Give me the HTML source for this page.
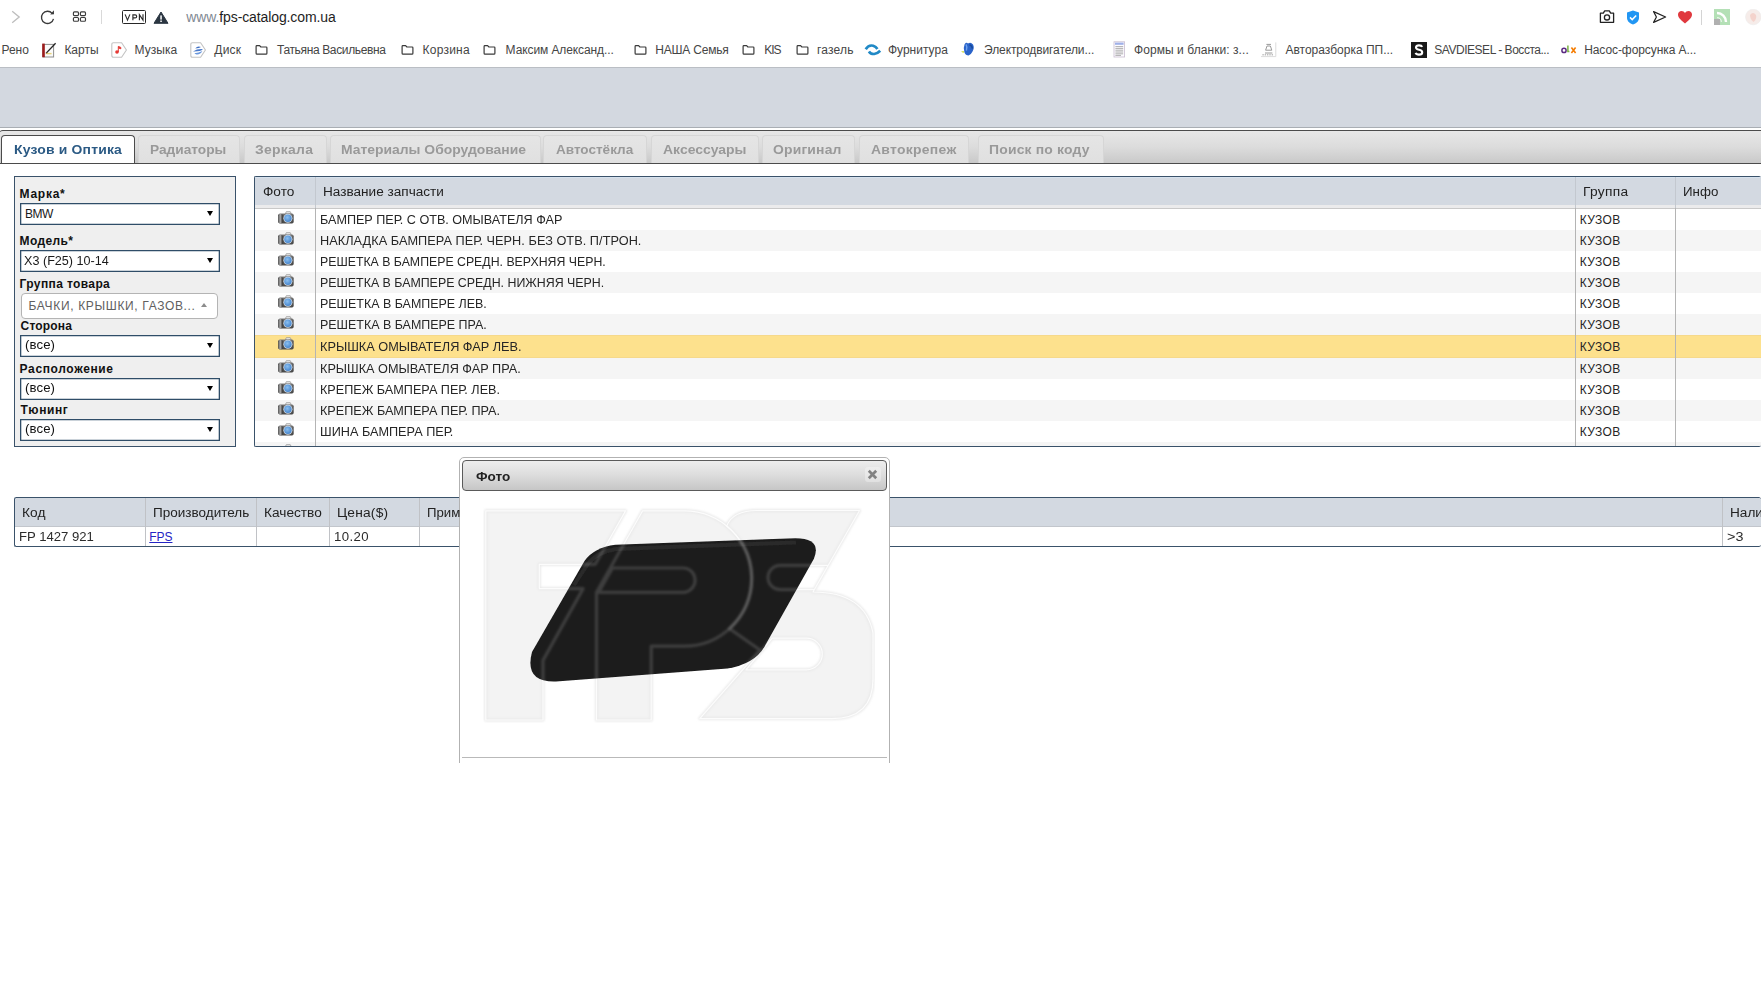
<!DOCTYPE html>
<html lang="ru"><head><meta charset="utf-8"><title>FPS catalog</title>
<style>
html,body{margin:0;padding:0;}
html{overflow:hidden;width:1761px;height:987px;}
body{width:1761px;height:987px;overflow:hidden;position:relative;background:#fff;
 font-family:"Liberation Sans",sans-serif;color:#222;}
.a{position:absolute;box-sizing:border-box;}
.t{position:absolute;transform-origin:0 50%;white-space:nowrap;line-height:1;font-family:"Liberation Sans",sans-serif;color:#222;}
svg{position:absolute;overflow:visible;}
/* page header band */
#band{left:0;top:67px;width:1761px;height:61px;background:#d3d8e0;border-top:1px solid #babec4;border-bottom:1px solid #a9aeb4;}
/* tab strip */
#tabs{left:-2px;top:130px;width:1763px;height:34px;border:1px solid #4b4b4b;border-right:none;border-radius:5px 0 0 0;
 background:linear-gradient(#e7e7e7 0%,#dcdcdc 50%,#c9c9c9 100%);}
.tab{top:135px;height:28px;border:1px solid #d6d6d6;border-bottom:none;border-radius:4px 4px 0 0;
 background:linear-gradient(#e5e5e5,#e0e0e0);}
.tab.on{height:28px;background:#fff;border-color:#4b4b4b;}
/* filter panel */
#panel{left:14px;top:176px;width:222px;height:271px;background:#efefef;border:1px solid #3a526a;}
.sel{left:20px;width:200px;height:22px;background:#fff;border:1px solid #2f4d68;box-shadow:inset 0 0 0 .3px #2f4d68;}
.arr{width:0;height:0;border-left:3.2px solid transparent;border-right:3.2px solid transparent;border-top:5.6px solid #000;}
#s2{left:20.5px;top:293px;width:197.5px;height:26px;background:#fff;border:1px solid #b4b4b4;border-radius:4px;}
/* grids */
.grid{border:1px solid #3a526a;border-right:none;background:#fff;overflow:hidden;}
.gh{background:#d3d9e1;}
.vl{width:1px;background:#b4b4b4;}
.row{left:0;width:1506px;}
.alt{background:#f5f5f5;}
.hl{background:#fde18d;border-top:1px solid #f6d98b;border-bottom:1px solid #f6d98b;}
/* dialog */
#dlg{left:459px;top:457px;width:431px;height:320px;background:#fff;border:1px solid #b2b2b2;border-radius:5px;}
#dlgt{left:462px;top:460px;width:425px;height:31px;border:1px solid #5a5a5a;border-radius:4px;
 background:linear-gradient(#ededed 0%,#dedede 45%,#c6c6c6 100%);}
#dlgx{left:865px;top:467px;width:16px;height:15px;border-radius:3px;background:rgba(255,255,255,.32);}

</style></head>
<body>
<!-- browser toolbar -->
<svg style="left:10px;top:9px" width="12" height="16" viewBox="0 0 12 16"><path d="M2.2 2.3 L9.2 8 L2.2 13.7" fill="none" stroke="#bdbdbd" stroke-width="1.3"/></svg>
<svg style="left:39px;top:9px" width="17" height="17" viewBox="0 0 17 17"><path d="M13.2 4.4 A6.1 6.1 0 1 0 14.5 9.9" fill="none" stroke="#3a3a3a" stroke-width="1.35"/><path d="M11.2 5.4 L15 5.2 L14.9 1.3 Z" fill="#3a3a3a"/></svg>
<svg style="left:72px;top:10px" width="15" height="13" viewBox="0 0 15 13"><g fill="none" stroke="#3c3c3c" stroke-width="1.15"><rect x="1.4" y="1.9" width="5.1" height="3.7" rx="1"/><rect x="8.4" y="1.9" width="5.1" height="3.7" rx="1"/><rect x="1.4" y="7.5" width="5.1" height="3.7" rx="1"/><rect x="8.4" y="7.5" width="5.1" height="3.7" rx="1"/></g></svg>
<div class="a" style="left:101px;top:10px;width:1px;height:14px;background:#d9d9d9"></div>
<div class="a" style="left:122px;top:10px;width:24px;height:14px;border:1.25px solid #262626;border-radius:1.5px"></div>
<svg style="left:124px;top:13px" width="21" height="9" viewBox="0 0 21 9"><g fill="none" stroke="#2a2a2a" stroke-width="1.15" stroke-linejoin="miter"><path d="M1.1 1.4 L3.5 7.1 L5.9 1.4"/><path d="M8.9 7.3 V1.9 H11.1 Q12.7 1.9 12.7 3.4 Q12.7 4.9 11.1 4.9 H8.9"/><path d="M15.4 7.3 V1.6 L19 7 V1.3"/></g></svg>
<svg style="left:153px;top:11px" width="16" height="13" viewBox="0 0 16 13"><path d="M8 1 L15 12.3 H1 Z" fill="#2b3642" stroke="#2b3642" stroke-width="1" stroke-linejoin="round"/><rect x="7.3" y="4.4" width="1.5" height="4.2" fill="#fff"/><rect x="7.3" y="9.5" width="1.5" height="1.5" fill="#fff"/></svg>
<svg style="left:1599px;top:9px" width="16" height="15" viewBox="0 0 16 15"><path d="M1.4 4.2 H4.3 L5.7 1.8 H10.3 L11.7 4.2 H14.6 V13.3 H1.4 Z" fill="none" stroke="#222" stroke-width="1.3" stroke-linejoin="round"/><circle cx="8" cy="8.4" r="2.6" fill="none" stroke="#222" stroke-width="1.3"/></svg>
<svg style="left:1626px;top:10px" width="14" height="15" viewBox="0 0 14 15"><path d="M7 0.6 L13 2.6 V7.8 C13 11.2 10.3 13.6 7 14.6 C3.7 13.6 1 11.2 1 7.8 V2.6 Z" fill="#2196f3"/><path d="M4 7.4 L6.2 9.6 L10.2 5.4" fill="none" stroke="#fff" stroke-width="1.5"/></svg>
<svg style="left:1652px;top:10px" width="15" height="14" viewBox="0 0 15 14"><path d="M1.6 1.6 L13.6 7 L1.6 12.4 L4.4 7 Z" fill="none" stroke="#222" stroke-width="1.2" stroke-linejoin="round"/></svg>
<svg style="left:1677px;top:10px" width="16" height="14" viewBox="0 0 16 14"><path d="M8 13.4 C3 9.6 1 7.2 1 4.6 C1 2.4 2.7 1 4.5 1 C6 1 7.3 1.9 8 3.1 C8.7 1.9 10 1 11.5 1 C13.3 1 15 2.4 15 4.6 C15 7.2 13 9.6 8 13.4 Z" fill="#e0393e"/></svg>
<div class="a" style="left:1701px;top:10px;width:1px;height:15px;background:#d4d4d4"></div>
<svg style="left:1714px;top:9px" width="16" height="16" viewBox="0 0 16 16"><rect x="0" y="0" width="16" height="16" fill="#b4e0b6"/><path d="M3 4 A9 9 0 0 1 12 13" fill="none" stroke="#fff" stroke-width="2.4"/><path d="M3 8.6 A4.4 4.4 0 0 1 7.4 13" fill="none" stroke="#e8f5e9" stroke-width="1.2"/><rect x="0" y="10" width="6" height="6" fill="#b0b0b0"/></svg>
<svg style="left:1745px;top:9px;overflow:hidden" width="16" height="17" viewBox="0 0 16 17"><circle cx="8.3" cy="8" r="7.8" fill="#f6ece9" stroke="#ececec" stroke-width=".6"/><path d="M5 6 Q8 2 11 6 Q12 10 8.5 13 Q5 10 5 6Z" fill="#f3c9bf" opacity=".7"/></svg>
<!-- bookmarks -->
<svg style="left:254.5px;top:44px" width="13" height="12" viewBox="0 0 13 12"><path d="M1.1 9.2 V2.4 Q1.1 1.6 1.9 1.6 H4.6 L5.9 3 H11.1 Q11.9 3 11.9 3.8 V9.2 Q11.9 10.2 11 10.2 H2 Q1.1 10.2 1.1 9.2 Z" fill="none" stroke="#3a3a3a" stroke-width="1.2" stroke-linejoin="round"/></svg>
<svg style="left:400.6px;top:44px" width="13" height="12" viewBox="0 0 13 12"><path d="M1.1 9.2 V2.4 Q1.1 1.6 1.9 1.6 H4.6 L5.9 3 H11.1 Q11.9 3 11.9 3.8 V9.2 Q11.9 10.2 11 10.2 H2 Q1.1 10.2 1.1 9.2 Z" fill="none" stroke="#3a3a3a" stroke-width="1.2" stroke-linejoin="round"/></svg>
<svg style="left:483.4px;top:44px" width="13" height="12" viewBox="0 0 13 12"><path d="M1.1 9.2 V2.4 Q1.1 1.6 1.9 1.6 H4.6 L5.9 3 H11.1 Q11.9 3 11.9 3.8 V9.2 Q11.9 10.2 11 10.2 H2 Q1.1 10.2 1.1 9.2 Z" fill="none" stroke="#3a3a3a" stroke-width="1.2" stroke-linejoin="round"/></svg>
<svg style="left:633.7px;top:44px" width="13" height="12" viewBox="0 0 13 12"><path d="M1.1 9.2 V2.4 Q1.1 1.6 1.9 1.6 H4.6 L5.9 3 H11.1 Q11.9 3 11.9 3.8 V9.2 Q11.9 10.2 11 10.2 H2 Q1.1 10.2 1.1 9.2 Z" fill="none" stroke="#3a3a3a" stroke-width="1.2" stroke-linejoin="round"/></svg>
<svg style="left:742px;top:44px" width="13" height="12" viewBox="0 0 13 12"><path d="M1.1 9.2 V2.4 Q1.1 1.6 1.9 1.6 H4.6 L5.9 3 H11.1 Q11.9 3 11.9 3.8 V9.2 Q11.9 10.2 11 10.2 H2 Q1.1 10.2 1.1 9.2 Z" fill="none" stroke="#3a3a3a" stroke-width="1.2" stroke-linejoin="round"/></svg>
<svg style="left:795.5px;top:44px" width="13" height="12" viewBox="0 0 13 12"><path d="M1.1 9.2 V2.4 Q1.1 1.6 1.9 1.6 H4.6 L5.9 3 H11.1 Q11.9 3 11.9 3.8 V9.2 Q11.9 10.2 11 10.2 H2 Q1.1 10.2 1.1 9.2 Z" fill="none" stroke="#3a3a3a" stroke-width="1.2" stroke-linejoin="round"/></svg>
<svg style="left:41px;top:41px" width="17" height="18" viewBox="0 0 17 18"><rect x="2" y="3.4" width="10.6" height="12.6" fill="#fafafa" stroke="#8d8d8d" stroke-width="1"/><rect x="1.2" y="2.6" width="2.6" height="13.6" fill="#9c1b1b"/><path d="M5.6 12.6 H10.6" stroke="#e6d27a" stroke-width="1.4"/><path d="M5 12.4 L14.6 2.2" stroke="#222" stroke-width="1.3"/><path d="M4.4 13.4 L5.8 11.6 L6.4 12.2 Z" fill="#caa24a"/></svg>
<svg style="left:110.6px;top:42px" width="17" height="17" viewBox="0 0 17 17"><path d="M2.4 0.8 H10.6 L15.4 8 L10.6 15.2 H2.4 Q0.8 15.2 0.8 13.6 V2.4 Q0.8 0.8 2.4 0.8 Z" fill="#fff" stroke="#c4c4c4" stroke-width="1.1"/><circle cx="6" cy="10" r="1.8" fill="#e53935"/><path d="M7.3 10 V4.4 L9.8 5.4 V6.8 L7.3 5.9" fill="#e53935" stroke="#e53935" stroke-width="1" stroke-linejoin="round"/></svg>
<svg style="left:189.6px;top:42px" width="17" height="17" viewBox="0 0 17 17"><path d="M2.4 0.8 H10.6 L15.4 8 L10.6 15.2 H2.4 Q0.8 15.2 0.8 13.6 V2.4 Q0.8 0.8 2.4 0.8 Z" fill="#fff" stroke="#c4c4c4" stroke-width="1.1"/><path d="M5.2 6.6 Q7.6 3.4 11 5 Q9.4 6.4 5.2 6.6Z" fill="#3f6fc4"/><path d="M3 9.4 Q7.6 6.6 13 7.2 Q10.6 9.6 3 9.4Z" fill="#4a7acb"/><path d="M4.4 11.2 Q9 11 12.4 9 Q10.6 12.6 6.6 12.4 Q5.2 12.2 4.4 11.2Z" fill="#6a97dc"/></svg>
<svg style="left:864px;top:42px" width="18" height="14" viewBox="0 0 18 14"><g fill="none" stroke="#2089c6" stroke-width="2.7"><path d="M1.7 7.2 Q4.6 2.6 9.2 3.7 Q12 4.6 13.4 7"/><path d="M4.9 9.4 Q6.8 12.2 10.2 12 Q13.6 11.5 16.2 8.8"/></g></svg>
<svg style="left:960px;top:41px" width="16" height="17" viewBox="0 0 16 17"><path d="M4.6 3.2 Q6.4 0.8 8 2.6 Q10.6 0.6 13 3.4 Q14.8 6.6 12.4 10.8 Q10.8 14 8.6 14.6 Q5.6 14.4 4.4 11.2 Q3 7 4.6 3.2Z" fill="#2a63c9"/><path d="M6 3.4 Q7.6 6 6.4 9.6" stroke="#6fa2ee" stroke-width="1.4" fill="none"/><path d="M9.4 4 Q12 4.2 12.4 7.6" stroke="#174a9c" stroke-width="1.4" fill="none"/><path d="M1 10.4 L4 10 L3.6 12Z" fill="#cddc39"/></svg>
<svg style="left:1113px;top:41px" width="13" height="17" viewBox="0 0 13 17"><rect x="1" y="0.8" width="10.6" height="15.2" fill="#fdfcff" stroke="#c9bcd0" stroke-width=".8"/><rect x="2" y="1.6" width="8.6" height="2.2" fill="#9fb0e8"/><g stroke="#9a9a9a" stroke-width=".8"><path d="M2.4 5.6H10.2M2.4 7.4H10.2M2.4 9.2H10.2M2.4 11H10.2M2.4 12.8H10.2M2.4 14.4H8"/></g></svg>
<svg style="left:1260px;top:41px" width="17" height="17" viewBox="0 0 17 17"><path d="M15.8 1.4 V15.6 H1" fill="none" stroke="#dcdcdc" stroke-width="1"/><path d="M6.4 3.4 H11 M7 5 H10.4 L11.8 9.2 H5.6 Z M5 12 H12.4" fill="none" stroke="#9a9a9a" stroke-width="1"/><path d="M2.4 13.8 H13.6" stroke="#bdbdbd" stroke-width="1.4" stroke-dasharray="1.4 .9"/></svg>
<svg style="left:1411px;top:42px" width="16" height="16" viewBox="0 0 16 16"><rect width="16" height="16" fill="#1a1a1a"/><path d="M11.2 4.9 Q10.6 3.4 8 3.4 Q5 3.4 5 5.6 Q5 7.2 8 7.8 Q11.2 8.4 11.2 10.4 Q11.2 12.6 8 12.6 Q5.2 12.6 4.6 10.9" fill="none" stroke="#fff" stroke-width="2.1"/></svg>
<svg style="left:1561px;top:44px" width="16" height="11" viewBox="0 0 16 11"><circle cx="3" cy="6.4" r="2.1" fill="none" stroke="#5b2b82" stroke-width="1.5"/><path d="M6.9 1.6 V7.6 H8.4" fill="none" stroke="#7cb342" stroke-width="1.5"/><path d="M10.4 3.6 L14.6 9 M14.6 3.6 L10.4 9" fill="none" stroke="#f57c00" stroke-width="1.6"/></svg>
<!-- page header band and tab strip -->
<div class="a" id="band"></div>
<div class="a" id="tabs"></div>
<div class="a tab on" style="left:1px;width:134.0px"></div>
<div class="a tab" style="left:137.5px;width:102.5px"></div>
<div class="a tab" style="left:243.5px;width:83.5px"></div>
<div class="a tab" style="left:329.5px;width:211.0px"></div>
<div class="a tab" style="left:543px;width:104.0px"></div>
<div class="a tab" style="left:651px;width:108.0px"></div>
<div class="a tab" style="left:762px;width:93.0px"></div>
<div class="a tab" style="left:859px;width:110.0px"></div>
<div class="a tab" style="left:977.5px;width:126.0px"></div>
<!-- filter panel -->
<div class="a" id="panel"></div>
<div class="a sel" style="top:203px"></div>
<div class="a arr" style="left:207px;top:211.4px"></div>
<div class="a sel" style="top:250px"></div>
<div class="a arr" style="left:207px;top:258.4px"></div>
<div class="a sel" style="top:335px"></div>
<div class="a arr" style="left:207px;top:343.4px"></div>
<div class="a sel" style="top:378px"></div>
<div class="a arr" style="left:207px;top:386.4px"></div>
<div class="a sel" style="top:419px"></div>
<div class="a arr" style="left:207px;top:427.4px"></div>
<div class="a" id="s2"></div>
<div class="a" style="left:200.8px;top:303px;width:0;height:0;border-left:3.2px solid transparent;border-right:3.2px solid transparent;border-bottom:4.6px solid #8c8c8c"></div>
<!-- main parts grid -->
<div class="a grid" style="left:254px;top:176px;width:1507px;height:271px;border-radius:2px">
<div class="a gh" style="left:0;top:0;width:1506px;height:28px;border-top:1px solid #d6e2ee"></div>
<div class="a" style="left:0;top:28px;width:1506px;height:4px;background:#ebebec;border-bottom:1px solid #c9c9c9"></div>
<div class="a row alt" style="top:52.6px;height:21.0px"></div>
<div class="a row alt" style="top:94.7px;height:21.0px"></div>
<div class="a row alt" style="top:136.8px;height:21.2px"></div>
<div class="a row hl" style="top:158.0px;height:22.7px"></div>
<div class="a row alt" style="top:180.7px;height:21.1px"></div>
<div class="a row alt" style="top:222.8px;height:21.1px"></div>
<div class="a row alt" style="top:264.9px;height:21.1px"></div>
<div class="a vl" style="left:60px;top:0;height:271px"></div>
<div class="a vl" style="left:1320px;top:0;height:271px"></div>
<div class="a vl" style="left:1420px;top:0;height:271px"></div>
<div class="a" style="left:60px;top:0;width:1px;height:31px;background:#c3c8cf"></div>
<div class="a" style="left:1320px;top:0;width:1px;height:31px;background:#c3c8cf"></div>
<div class="a" style="left:1420px;top:0;width:1px;height:31px;background:#c3c8cf"></div>
<svg style="left:23px;top:33.9px" width="16" height="13" viewBox="0 0 16 13"><defs><linearGradient id="g1" x1="0" y1="0" x2="0" y2="1"><stop offset="0" stop-color="#7c7c7c"/><stop offset=".25" stop-color="#5a5a5a"/><stop offset="1" stop-color="#484848"/></linearGradient><linearGradient id="h1" x1="0" y1="0" x2="1" y2="0"><stop offset="0" stop-color="#4a4a4a"/><stop offset=".4" stop-color="#b4b4b4"/><stop offset=".75" stop-color="#6a6a6a"/><stop offset="1" stop-color="#3a3a3a"/></linearGradient><radialGradient id="l1" cx=".42" cy=".38" r=".65"><stop offset="0" stop-color="#8cc0f0"/><stop offset="1" stop-color="#4383cc"/></radialGradient></defs><path d="M7.3 2.8 L8.3 0.7 H12.3 L13.3 2.8 Z" fill="#ececec" stroke="#8c8c8c" stroke-width=".7"/><rect x="0.3" y="2.6" width="15.4" height="9.8" rx="1.7" fill="url(#g1)"/><rect x="0.5" y="3" width="4.1" height="9.2" rx="1.3" fill="url(#h1)"/><circle cx="9.9" cy="7.3" r="4.5" fill="#d3dce6"/><circle cx="9.9" cy="7.3" r="3.7" fill="url(#l1)"/></svg>
<svg style="left:23px;top:55.0px" width="16" height="13" viewBox="0 0 16 13"><defs><linearGradient id="g2" x1="0" y1="0" x2="0" y2="1"><stop offset="0" stop-color="#7c7c7c"/><stop offset=".25" stop-color="#5a5a5a"/><stop offset="1" stop-color="#484848"/></linearGradient><linearGradient id="h2" x1="0" y1="0" x2="1" y2="0"><stop offset="0" stop-color="#4a4a4a"/><stop offset=".4" stop-color="#b4b4b4"/><stop offset=".75" stop-color="#6a6a6a"/><stop offset="1" stop-color="#3a3a3a"/></linearGradient><radialGradient id="l2" cx=".42" cy=".38" r=".65"><stop offset="0" stop-color="#8cc0f0"/><stop offset="1" stop-color="#4383cc"/></radialGradient></defs><path d="M7.3 2.8 L8.3 0.7 H12.3 L13.3 2.8 Z" fill="#ececec" stroke="#8c8c8c" stroke-width=".7"/><rect x="0.3" y="2.6" width="15.4" height="9.8" rx="1.7" fill="url(#g2)"/><rect x="0.5" y="3" width="4.1" height="9.2" rx="1.3" fill="url(#h2)"/><circle cx="9.9" cy="7.3" r="4.5" fill="#d3dce6"/><circle cx="9.9" cy="7.3" r="3.7" fill="url(#l2)"/></svg>
<svg style="left:23px;top:76.0px" width="16" height="13" viewBox="0 0 16 13"><defs><linearGradient id="g3" x1="0" y1="0" x2="0" y2="1"><stop offset="0" stop-color="#7c7c7c"/><stop offset=".25" stop-color="#5a5a5a"/><stop offset="1" stop-color="#484848"/></linearGradient><linearGradient id="h3" x1="0" y1="0" x2="1" y2="0"><stop offset="0" stop-color="#4a4a4a"/><stop offset=".4" stop-color="#b4b4b4"/><stop offset=".75" stop-color="#6a6a6a"/><stop offset="1" stop-color="#3a3a3a"/></linearGradient><radialGradient id="l3" cx=".42" cy=".38" r=".65"><stop offset="0" stop-color="#8cc0f0"/><stop offset="1" stop-color="#4383cc"/></radialGradient></defs><path d="M7.3 2.8 L8.3 0.7 H12.3 L13.3 2.8 Z" fill="#ececec" stroke="#8c8c8c" stroke-width=".7"/><rect x="0.3" y="2.6" width="15.4" height="9.8" rx="1.7" fill="url(#g3)"/><rect x="0.5" y="3" width="4.1" height="9.2" rx="1.3" fill="url(#h3)"/><circle cx="9.9" cy="7.3" r="4.5" fill="#d3dce6"/><circle cx="9.9" cy="7.3" r="3.7" fill="url(#l3)"/></svg>
<svg style="left:23px;top:97.1px" width="16" height="13" viewBox="0 0 16 13"><defs><linearGradient id="g4" x1="0" y1="0" x2="0" y2="1"><stop offset="0" stop-color="#7c7c7c"/><stop offset=".25" stop-color="#5a5a5a"/><stop offset="1" stop-color="#484848"/></linearGradient><linearGradient id="h4" x1="0" y1="0" x2="1" y2="0"><stop offset="0" stop-color="#4a4a4a"/><stop offset=".4" stop-color="#b4b4b4"/><stop offset=".75" stop-color="#6a6a6a"/><stop offset="1" stop-color="#3a3a3a"/></linearGradient><radialGradient id="l4" cx=".42" cy=".38" r=".65"><stop offset="0" stop-color="#8cc0f0"/><stop offset="1" stop-color="#4383cc"/></radialGradient></defs><path d="M7.3 2.8 L8.3 0.7 H12.3 L13.3 2.8 Z" fill="#ececec" stroke="#8c8c8c" stroke-width=".7"/><rect x="0.3" y="2.6" width="15.4" height="9.8" rx="1.7" fill="url(#g4)"/><rect x="0.5" y="3" width="4.1" height="9.2" rx="1.3" fill="url(#h4)"/><circle cx="9.9" cy="7.3" r="4.5" fill="#d3dce6"/><circle cx="9.9" cy="7.3" r="3.7" fill="url(#l4)"/></svg>
<svg style="left:23px;top:118.1px" width="16" height="13" viewBox="0 0 16 13"><defs><linearGradient id="g5" x1="0" y1="0" x2="0" y2="1"><stop offset="0" stop-color="#7c7c7c"/><stop offset=".25" stop-color="#5a5a5a"/><stop offset="1" stop-color="#484848"/></linearGradient><linearGradient id="h5" x1="0" y1="0" x2="1" y2="0"><stop offset="0" stop-color="#4a4a4a"/><stop offset=".4" stop-color="#b4b4b4"/><stop offset=".75" stop-color="#6a6a6a"/><stop offset="1" stop-color="#3a3a3a"/></linearGradient><radialGradient id="l5" cx=".42" cy=".38" r=".65"><stop offset="0" stop-color="#8cc0f0"/><stop offset="1" stop-color="#4383cc"/></radialGradient></defs><path d="M7.3 2.8 L8.3 0.7 H12.3 L13.3 2.8 Z" fill="#ececec" stroke="#8c8c8c" stroke-width=".7"/><rect x="0.3" y="2.6" width="15.4" height="9.8" rx="1.7" fill="url(#g5)"/><rect x="0.5" y="3" width="4.1" height="9.2" rx="1.3" fill="url(#h5)"/><circle cx="9.9" cy="7.3" r="4.5" fill="#d3dce6"/><circle cx="9.9" cy="7.3" r="3.7" fill="url(#l5)"/></svg>
<svg style="left:23px;top:139.2px" width="16" height="13" viewBox="0 0 16 13"><defs><linearGradient id="g6" x1="0" y1="0" x2="0" y2="1"><stop offset="0" stop-color="#7c7c7c"/><stop offset=".25" stop-color="#5a5a5a"/><stop offset="1" stop-color="#484848"/></linearGradient><linearGradient id="h6" x1="0" y1="0" x2="1" y2="0"><stop offset="0" stop-color="#4a4a4a"/><stop offset=".4" stop-color="#b4b4b4"/><stop offset=".75" stop-color="#6a6a6a"/><stop offset="1" stop-color="#3a3a3a"/></linearGradient><radialGradient id="l6" cx=".42" cy=".38" r=".65"><stop offset="0" stop-color="#8cc0f0"/><stop offset="1" stop-color="#4383cc"/></radialGradient></defs><path d="M7.3 2.8 L8.3 0.7 H12.3 L13.3 2.8 Z" fill="#ececec" stroke="#8c8c8c" stroke-width=".7"/><rect x="0.3" y="2.6" width="15.4" height="9.8" rx="1.7" fill="url(#g6)"/><rect x="0.5" y="3" width="4.1" height="9.2" rx="1.3" fill="url(#h6)"/><circle cx="9.9" cy="7.3" r="4.5" fill="#d3dce6"/><circle cx="9.9" cy="7.3" r="3.7" fill="url(#l6)"/></svg>
<svg style="left:23px;top:160.4px" width="16" height="13" viewBox="0 0 16 13"><defs><linearGradient id="g7" x1="0" y1="0" x2="0" y2="1"><stop offset="0" stop-color="#7c7c7c"/><stop offset=".25" stop-color="#5a5a5a"/><stop offset="1" stop-color="#484848"/></linearGradient><linearGradient id="h7" x1="0" y1="0" x2="1" y2="0"><stop offset="0" stop-color="#4a4a4a"/><stop offset=".4" stop-color="#b4b4b4"/><stop offset=".75" stop-color="#6a6a6a"/><stop offset="1" stop-color="#3a3a3a"/></linearGradient><radialGradient id="l7" cx=".42" cy=".38" r=".65"><stop offset="0" stop-color="#8cc0f0"/><stop offset="1" stop-color="#4383cc"/></radialGradient></defs><path d="M7.3 2.8 L8.3 0.7 H12.3 L13.3 2.8 Z" fill="#ececec" stroke="#8c8c8c" stroke-width=".7"/><rect x="0.3" y="2.6" width="15.4" height="9.8" rx="1.7" fill="url(#g7)"/><rect x="0.5" y="3" width="4.1" height="9.2" rx="1.3" fill="url(#h7)"/><circle cx="9.9" cy="7.3" r="4.5" fill="#d3dce6"/><circle cx="9.9" cy="7.3" r="3.7" fill="url(#l7)"/></svg>
<svg style="left:23px;top:183.1px" width="16" height="13" viewBox="0 0 16 13"><defs><linearGradient id="g8" x1="0" y1="0" x2="0" y2="1"><stop offset="0" stop-color="#7c7c7c"/><stop offset=".25" stop-color="#5a5a5a"/><stop offset="1" stop-color="#484848"/></linearGradient><linearGradient id="h8" x1="0" y1="0" x2="1" y2="0"><stop offset="0" stop-color="#4a4a4a"/><stop offset=".4" stop-color="#b4b4b4"/><stop offset=".75" stop-color="#6a6a6a"/><stop offset="1" stop-color="#3a3a3a"/></linearGradient><radialGradient id="l8" cx=".42" cy=".38" r=".65"><stop offset="0" stop-color="#8cc0f0"/><stop offset="1" stop-color="#4383cc"/></radialGradient></defs><path d="M7.3 2.8 L8.3 0.7 H12.3 L13.3 2.8 Z" fill="#ececec" stroke="#8c8c8c" stroke-width=".7"/><rect x="0.3" y="2.6" width="15.4" height="9.8" rx="1.7" fill="url(#g8)"/><rect x="0.5" y="3" width="4.1" height="9.2" rx="1.3" fill="url(#h8)"/><circle cx="9.9" cy="7.3" r="4.5" fill="#d3dce6"/><circle cx="9.9" cy="7.3" r="3.7" fill="url(#l8)"/></svg>
<svg style="left:23px;top:204.2px" width="16" height="13" viewBox="0 0 16 13"><defs><linearGradient id="g9" x1="0" y1="0" x2="0" y2="1"><stop offset="0" stop-color="#7c7c7c"/><stop offset=".25" stop-color="#5a5a5a"/><stop offset="1" stop-color="#484848"/></linearGradient><linearGradient id="h9" x1="0" y1="0" x2="1" y2="0"><stop offset="0" stop-color="#4a4a4a"/><stop offset=".4" stop-color="#b4b4b4"/><stop offset=".75" stop-color="#6a6a6a"/><stop offset="1" stop-color="#3a3a3a"/></linearGradient><radialGradient id="l9" cx=".42" cy=".38" r=".65"><stop offset="0" stop-color="#8cc0f0"/><stop offset="1" stop-color="#4383cc"/></radialGradient></defs><path d="M7.3 2.8 L8.3 0.7 H12.3 L13.3 2.8 Z" fill="#ececec" stroke="#8c8c8c" stroke-width=".7"/><rect x="0.3" y="2.6" width="15.4" height="9.8" rx="1.7" fill="url(#g9)"/><rect x="0.5" y="3" width="4.1" height="9.2" rx="1.3" fill="url(#h9)"/><circle cx="9.9" cy="7.3" r="4.5" fill="#d3dce6"/><circle cx="9.9" cy="7.3" r="3.7" fill="url(#l9)"/></svg>
<svg style="left:23px;top:225.2px" width="16" height="13" viewBox="0 0 16 13"><defs><linearGradient id="g10" x1="0" y1="0" x2="0" y2="1"><stop offset="0" stop-color="#7c7c7c"/><stop offset=".25" stop-color="#5a5a5a"/><stop offset="1" stop-color="#484848"/></linearGradient><linearGradient id="h10" x1="0" y1="0" x2="1" y2="0"><stop offset="0" stop-color="#4a4a4a"/><stop offset=".4" stop-color="#b4b4b4"/><stop offset=".75" stop-color="#6a6a6a"/><stop offset="1" stop-color="#3a3a3a"/></linearGradient><radialGradient id="l10" cx=".42" cy=".38" r=".65"><stop offset="0" stop-color="#8cc0f0"/><stop offset="1" stop-color="#4383cc"/></radialGradient></defs><path d="M7.3 2.8 L8.3 0.7 H12.3 L13.3 2.8 Z" fill="#ececec" stroke="#8c8c8c" stroke-width=".7"/><rect x="0.3" y="2.6" width="15.4" height="9.8" rx="1.7" fill="url(#g10)"/><rect x="0.5" y="3" width="4.1" height="9.2" rx="1.3" fill="url(#h10)"/><circle cx="9.9" cy="7.3" r="4.5" fill="#d3dce6"/><circle cx="9.9" cy="7.3" r="3.7" fill="url(#l10)"/></svg>
<svg style="left:23px;top:246.3px" width="16" height="13" viewBox="0 0 16 13"><defs><linearGradient id="g11" x1="0" y1="0" x2="0" y2="1"><stop offset="0" stop-color="#7c7c7c"/><stop offset=".25" stop-color="#5a5a5a"/><stop offset="1" stop-color="#484848"/></linearGradient><linearGradient id="h11" x1="0" y1="0" x2="1" y2="0"><stop offset="0" stop-color="#4a4a4a"/><stop offset=".4" stop-color="#b4b4b4"/><stop offset=".75" stop-color="#6a6a6a"/><stop offset="1" stop-color="#3a3a3a"/></linearGradient><radialGradient id="l11" cx=".42" cy=".38" r=".65"><stop offset="0" stop-color="#8cc0f0"/><stop offset="1" stop-color="#4383cc"/></radialGradient></defs><path d="M7.3 2.8 L8.3 0.7 H12.3 L13.3 2.8 Z" fill="#ececec" stroke="#8c8c8c" stroke-width=".7"/><rect x="0.3" y="2.6" width="15.4" height="9.8" rx="1.7" fill="url(#g11)"/><rect x="0.5" y="3" width="4.1" height="9.2" rx="1.3" fill="url(#h11)"/><circle cx="9.9" cy="7.3" r="4.5" fill="#d3dce6"/><circle cx="9.9" cy="7.3" r="3.7" fill="url(#l11)"/></svg>
<svg style="left:23px;top:267.3px" width="16" height="13" viewBox="0 0 16 13"><defs><linearGradient id="g12" x1="0" y1="0" x2="0" y2="1"><stop offset="0" stop-color="#7c7c7c"/><stop offset=".25" stop-color="#5a5a5a"/><stop offset="1" stop-color="#484848"/></linearGradient><linearGradient id="h12" x1="0" y1="0" x2="1" y2="0"><stop offset="0" stop-color="#4a4a4a"/><stop offset=".4" stop-color="#b4b4b4"/><stop offset=".75" stop-color="#6a6a6a"/><stop offset="1" stop-color="#3a3a3a"/></linearGradient><radialGradient id="l12" cx=".42" cy=".38" r=".65"><stop offset="0" stop-color="#8cc0f0"/><stop offset="1" stop-color="#4383cc"/></radialGradient></defs><path d="M7.3 2.8 L8.3 0.7 H12.3 L13.3 2.8 Z" fill="#ececec" stroke="#8c8c8c" stroke-width=".7"/><rect x="0.3" y="2.6" width="15.4" height="9.8" rx="1.7" fill="url(#g12)"/><rect x="0.5" y="3" width="4.1" height="9.2" rx="1.3" fill="url(#h12)"/><circle cx="9.9" cy="7.3" r="4.5" fill="#d3dce6"/><circle cx="9.9" cy="7.3" r="3.7" fill="url(#l12)"/></svg>
</div>
<!-- offers grid -->
<div class="a grid" style="left:14px;top:497px;width:1747px;height:50px;border-radius:2.5px">
<div class="a gh" style="left:0;top:0;width:1746px;height:29px;border-bottom:1px solid #c2c6cc"></div>
<div class="a vl" style="left:130px;top:0;height:50px;background:#c0c2c6"></div>
<div class="a vl" style="left:241px;top:0;height:50px;background:#c0c2c6"></div>
<div class="a vl" style="left:314px;top:0;height:50px;background:#c0c2c6"></div>
<div class="a vl" style="left:404px;top:0;height:50px;background:#c0c2c6"></div>
<div class="a vl" style="left:1707px;top:0;height:50px;background:#c0c2c6"></div>
</div>
<!-- photo dialog -->
<div class="a" style="left:455px;top:453px;width:440px;height:309.5px;overflow:hidden"><div class="a" id="dlg" style="left:4px;top:4px"></div></div>
<div class="a" id="dlgt"></div>
<div class="a" id="dlgx"></div>
<svg style="left:866px;top:468px" width="13" height="13" viewBox="0 0 13 13"><path d="M2.8 2.8 L10.2 10.2 M10.2 2.8 L2.8 10.2" stroke="#828282" stroke-width="2.7"/></svg>
<div class="a" style="left:462px;top:757px;width:425px;height:1px;background:#b9b9b9"></div>
<svg style="left:470px;top:495px" width="420" height="240" viewBox="0 0 420 240">
<defs>
<filter id="pb" x="-5%" y="-5%" width="110%" height="110%"><feGaussianBlur stdDeviation="0.7"/></filter>
<filter id="wb" x="-5%" y="-5%" width="110%" height="110%"><feGaussianBlur stdDeviation="0.9"/></filter>
<clipPath id="pc"><rect x="13" y="12" width="392" height="216"/></clipPath>
<clipPath id="pp"><path d="M114.5 66 Q124 52.5 145.5 49.8 L325.5 43.2 Q352 43.2 344 63.5 L294 152.5 Q284 169 257.5 173.5 L86 186.4 Q54 187.5 62 157 Z"/></clipPath>
</defs>
<g clip-path="url(#pc)">
<!-- FPS watermark on white -->
<g filter="url(#wb)" fill="#f3f3f3" stroke="#e9e9e9" stroke-width="3" stroke-linejoin="round"><path d="M15.8 15.8 H155.6 L125.2 69.3 H69.3 V93.6 H113.1 L73 165.4 V225 H15.8 Z"/><path fill-rule="evenodd" d="M172.7 15.8 H214 A67.7 67.7 0 0 1 214 151.2 H181.2 V225 H126.5 V97.3 Z M142.5 73 H214 A12.2 12.2 0 0 1 214 97.3 H128.7 Z"/><path fill-rule="evenodd" d="M256.7 31 Q263 15.5 287 15.5 H389.5 L343 97 Q395 97 403 138 V184 Q403 223.6 361.5 223.6 H229.8 L290 155 L259.5 133.6 A67.7 67.7 0 0 0 256.7 31 Z M358.2 70.3 H310.2 A12.2 12.2 0 0 0 310.2 94.7 H344.2 Z M302.2 143.2 H336.5 A15.8 15.8 0 0 1 336.5 174.8 H275.9 Z"/></g>
<g fill="none" stroke="#fcfcfc" stroke-width="1.2" stroke-linejoin="round"><path d="M15.8 15.8 H155.6 L125.2 69.3 H69.3 V93.6 H113.1 L73 165.4 V225 H15.8 Z"/><path fill-rule="evenodd" d="M172.7 15.8 H214 A67.7 67.7 0 0 1 214 151.2 H181.2 V225 H126.5 V97.3 Z M142.5 73 H214 A12.2 12.2 0 0 1 214 97.3 H128.7 Z"/><path fill-rule="evenodd" d="M256.7 31 Q263 15.5 287 15.5 H389.5 L343 97 Q395 97 403 138 V184 Q403 223.6 361.5 223.6 H229.8 L290 155 L259.5 133.6 A67.7 67.7 0 0 0 256.7 31 Z M358.2 70.3 H310.2 A12.2 12.2 0 0 0 310.2 94.7 H344.2 Z M302.2 143.2 H336.5 A15.8 15.8 0 0 1 336.5 174.8 H275.9 Z"/></g>
<!-- product: black washer cover -->
<path d="M114.5 66 Q124 52.5 145.5 49.8 L325.5 43.2 Q352 43.2 344 63.5 L294 152.5 Q284 169 257.5 173.5 L86 186.4 Q54 187.5 62 157 Z" filter="url(#pb)" fill="#1a1a1a"/>
<!-- bevel highlight along the upper edge -->
<g clip-path="url(#pp)"><path filter="url(#pb)" fill="none" stroke="#292929" stroke-width="4" d="M104 90 L117.8 69 Q127 57 146 54 L326 47.4"/></g>
<!-- watermark showing through the product -->
<g clip-path="url(#pp)"><g filter="url(#wb)" fill="none" stroke="#fff" stroke-opacity=".15" stroke-width="3.2" stroke-linejoin="round"><path d="M15.8 15.8 H155.6 L125.2 69.3 H69.3 V93.6 H113.1 L73 165.4 V225 H15.8 Z"/><path fill-rule="evenodd" d="M172.7 15.8 H214 A67.7 67.7 0 0 1 214 151.2 H181.2 V225 H126.5 V97.3 Z M142.5 73 H214 A12.2 12.2 0 0 1 214 97.3 H128.7 Z"/><path fill-rule="evenodd" d="M256.7 31 Q263 15.5 287 15.5 H389.5 L343 97 Q395 97 403 138 V184 Q403 223.6 361.5 223.6 H229.8 L290 155 L259.5 133.6 A67.7 67.7 0 0 0 256.7 31 Z M358.2 70.3 H310.2 A12.2 12.2 0 0 0 310.2 94.7 H344.2 Z M302.2 143.2 H336.5 A15.8 15.8 0 0 1 336.5 174.8 H275.9 Z"/></g></g>
</g>
</svg>

<!-- text layer -->
<div class="a" style="left:0;top:0;width:1761px;height:987px;overflow:hidden">
<span class="t" style="left:186.30px;top:10px;font-size:14px;color:#1e1e1e;letter-spacing:-0.112px;"><span style="color:#7f8993">www.</span>fps-catalog.com.ua</span>
<span class="t" style="left:1.50px;top:44px;font-size:12px;color:#454545;letter-spacing:-0.033px;">Рено</span>
<span class="t" style="left:64.40px;top:44px;font-size:12px;color:#454545;letter-spacing:-0.006px;">Карты</span>
<span class="t" style="left:134.60px;top:44px;font-size:12px;color:#454545;letter-spacing:0.018px;">Музыка</span>
<span class="t" style="left:214.30px;top:44px;font-size:12px;color:#454545;letter-spacing:0.239px;">Диск</span>
<span class="t" style="left:277.00px;top:44px;font-size:12px;color:#454545;letter-spacing:-0.358px;">Татьяна Васильевна</span>
<span class="t" style="left:422.50px;top:44px;font-size:12px;color:#454545;letter-spacing:0.236px;">Корзина</span>
<span class="t" style="left:505.60px;top:44px;font-size:12px;color:#454545;letter-spacing:-0.095px;">Максим Александ...</span>
<span class="t" style="left:655.20px;top:44px;font-size:12px;color:#454545;letter-spacing:-0.193px;">НАША Семья</span>
<span class="t" style="left:764.20px;top:44px;font-size:12px;color:#454545;letter-spacing:-0.978px;">KIS</span>
<span class="t" style="left:817.00px;top:44px;font-size:12px;color:#454545;letter-spacing:0.185px;">газель</span>
<span class="t" style="left:887.90px;top:44px;font-size:12px;color:#454545;letter-spacing:0.010px;">Фурнитура</span>
<span class="t" style="left:984.00px;top:44px;font-size:12px;color:#454545;letter-spacing:-0.088px;">Электродвигатели...</span>
<span class="t" style="left:1134.00px;top:44px;font-size:12px;color:#454545;letter-spacing:0.066px;">Формы и бланки: з...</span>
<span class="t" style="left:1285.40px;top:44px;font-size:12px;color:#454545;letter-spacing:0.004px;">Авторазборка ПП...</span>
<span class="t" style="left:1434.30px;top:44px;font-size:12px;color:#454545;letter-spacing:-0.475px;">SAVDIESEL - Восста...</span>
<span class="t" style="left:1584.20px;top:44px;font-size:12px;color:#454545;letter-spacing:-0.077px;">Насос-форсунка А...</span>
<span class="t" style="left:13.60px;top:144px;font-size:12px;font-weight:700;color:#2b5a84;letter-spacing:0.166px;transform:scaleX(1.1600);">Кузов и Оптика</span>
<span class="t" style="left:150.20px;top:144px;font-size:12px;font-weight:700;color:#999;transform:scaleX(1.1424);">Радиаторы</span>
<span class="t" style="left:254.50px;top:144px;font-size:12px;font-weight:700;color:#999;letter-spacing:0.239px;transform:scaleX(1.1600);">Зеркала</span>
<span class="t" style="left:341.40px;top:144px;font-size:12px;font-weight:700;color:#999;transform:scaleX(1.1583);">Материалы Оборудование</span>
<span class="t" style="left:556.00px;top:144px;font-size:12px;font-weight:700;color:#999;transform:scaleX(1.1278);">Автостёкла</span>
<span class="t" style="left:663.00px;top:144px;font-size:12px;font-weight:700;color:#999;letter-spacing:0.018px;transform:scaleX(1.1600);">Аксессуары</span>
<span class="t" style="left:773.40px;top:144px;font-size:12px;font-weight:700;color:#999;letter-spacing:0.148px;transform:scaleX(1.1600);">Оригинал</span>
<span class="t" style="left:870.90px;top:144px;font-size:12px;font-weight:700;color:#999;letter-spacing:0.257px;transform:scaleX(1.1600);">Автокрепеж</span>
<span class="t" style="left:989.10px;top:144px;font-size:12px;font-weight:700;color:#999;letter-spacing:0.161px;transform:scaleX(1.1600);">Поиск по коду</span>
<span class="t" style="left:19.60px;top:188px;font-size:12px;font-weight:700;color:#111;letter-spacing:0.727px;">Марка*</span>
<span class="t" style="left:19.60px;top:235px;font-size:12px;font-weight:700;color:#111;letter-spacing:0.378px;">Модель*</span>
<span class="t" style="left:19.60px;top:278px;font-size:12px;font-weight:700;color:#111;letter-spacing:0.380px;">Группа товара</span>
<span class="t" style="left:20.60px;top:320px;font-size:12px;font-weight:700;color:#111;letter-spacing:0.167px;">Сторона</span>
<span class="t" style="left:19.60px;top:363px;font-size:12px;font-weight:700;color:#111;letter-spacing:0.635px;">Расположение</span>
<span class="t" style="left:20.60px;top:404px;font-size:12px;font-weight:700;color:#111;letter-spacing:0.562px;">Тюнинг</span>
<span class="t" style="left:24.90px;top:208px;font-size:12px;color:#1a1a1a;letter-spacing:-0.488px;">BMW</span>
<span class="t" style="left:24.40px;top:255px;font-size:12px;color:#1a1a1a;transform:scaleX(1.0509);">X3 (F25) 10-14</span>
<span class="t" style="left:28.60px;top:300px;font-size:12px;color:#606060;letter-spacing:0.657px;">БАЧКИ, КРЫШКИ, ГАЗОВ...</span>
<span class="t" style="left:25.30px;top:339px;font-size:12px;color:#111;letter-spacing:0.087px;transform:scaleX(1.1000);">(все)</span>
<span class="t" style="left:25.30px;top:382px;font-size:12px;color:#111;letter-spacing:0.087px;transform:scaleX(1.1000);">(все)</span>
<span class="t" style="left:25.30px;top:423px;font-size:12px;color:#111;letter-spacing:0.087px;transform:scaleX(1.1000);">(все)</span>
<span class="t" style="left:262.60px;top:186px;font-size:12.5px;transform:scaleX(1.0915);">Фото</span>
<span class="t" style="left:323.00px;top:186px;font-size:12.5px;transform:scaleX(1.0874);">Название запчасти</span>
<span class="t" style="left:1582.80px;top:186px;font-size:12.5px;letter-spacing:0.281px;transform:scaleX(1.1000);">Группа</span>
<span class="t" style="left:1683.20px;top:186px;font-size:12.5px;transform:scaleX(1.0652);">Инфо</span>
<span class="t" style="left:319.60px;top:214px;font-size:12px;color:#262626;transform:scaleX(1.0505);">БАМПЕР ПЕР. С ОТВ. ОМЫВАТЕЛЯ ФАР</span>
<span class="t" style="left:1579.80px;top:214px;font-size:12px;color:#262626;letter-spacing:0.359px;">КУЗОВ</span>
<span class="t" style="left:319.60px;top:235px;font-size:12px;color:#262626;letter-spacing:0.041px;transform:scaleX(1.0600);">НАКЛАДКА БАМПЕРА ПЕР. ЧЕРН. БЕЗ ОТВ. П/ТРОН.</span>
<span class="t" style="left:1579.80px;top:235px;font-size:12px;color:#262626;letter-spacing:0.359px;">КУЗОВ</span>
<span class="t" style="left:319.60px;top:256px;font-size:12px;color:#262626;transform:scaleX(1.0257);">РЕШЕТКА В БАМПЕРЕ СРЕДН. ВЕРХНЯЯ ЧЕРН.</span>
<span class="t" style="left:1579.80px;top:256px;font-size:12px;color:#262626;letter-spacing:0.359px;">КУЗОВ</span>
<span class="t" style="left:319.60px;top:277px;font-size:12px;color:#262626;transform:scaleX(1.0318);">РЕШЕТКА В БАМПЕРЕ СРЕДН. НИЖНЯЯ ЧЕРН.</span>
<span class="t" style="left:1579.80px;top:277px;font-size:12px;color:#262626;letter-spacing:0.359px;">КУЗОВ</span>
<span class="t" style="left:319.60px;top:298px;font-size:12px;color:#262626;transform:scaleX(1.0374);">РЕШЕТКА В БАМПЕРЕ ЛЕВ.</span>
<span class="t" style="left:1579.80px;top:298px;font-size:12px;color:#262626;letter-spacing:0.359px;">КУЗОВ</span>
<span class="t" style="left:319.60px;top:319px;font-size:12px;color:#262626;transform:scaleX(1.0377);">РЕШЕТКА В БАМПЕРЕ ПРА.</span>
<span class="t" style="left:1579.80px;top:319px;font-size:12px;color:#262626;letter-spacing:0.359px;">КУЗОВ</span>
<span class="t" style="left:319.60px;top:341px;font-size:12px;color:#262626;transform:scaleX(1.0600);">КРЫШКА ОМЫВАТЕЛЯ ФАР ЛЕВ.</span>
<span class="t" style="left:1579.80px;top:341px;font-size:12px;color:#262626;letter-spacing:0.359px;">КУЗОВ</span>
<span class="t" style="left:319.60px;top:363px;font-size:12px;color:#262626;transform:scaleX(1.0560);">КРЫШКА ОМЫВАТЕЛЯ ФАР ПРА.</span>
<span class="t" style="left:1579.80px;top:363px;font-size:12px;color:#262626;letter-spacing:0.359px;">КУЗОВ</span>
<span class="t" style="left:319.60px;top:384px;font-size:12px;color:#262626;transform:scaleX(1.0522);">КРЕПЕЖ БАМПЕРА ПЕР. ЛЕВ.</span>
<span class="t" style="left:1579.80px;top:384px;font-size:12px;color:#262626;letter-spacing:0.359px;">КУЗОВ</span>
<span class="t" style="left:319.60px;top:405px;font-size:12px;color:#262626;transform:scaleX(1.0525);">КРЕПЕЖ БАМПЕРА ПЕР. ПРА.</span>
<span class="t" style="left:1579.80px;top:405px;font-size:12px;color:#262626;letter-spacing:0.359px;">КУЗОВ</span>
<span class="t" style="left:319.60px;top:426px;font-size:12px;color:#262626;transform:scaleX(1.0571);">ШИНА БАМПЕРА ПЕР.</span>
<span class="t" style="left:1579.80px;top:426px;font-size:12px;color:#262626;letter-spacing:0.359px;">КУЗОВ</span>
<span class="t" style="left:21.80px;top:507px;font-size:12.5px;letter-spacing:0.087px;transform:scaleX(1.1000);">Код</span>
<span class="t" style="left:153.00px;top:507px;font-size:12.5px;transform:scaleX(1.0814);">Производитель</span>
<span class="t" style="left:263.70px;top:507px;font-size:12.5px;transform:scaleX(1.0942);">Качество</span>
<span class="t" style="left:337.00px;top:507px;font-size:12.5px;letter-spacing:0.183px;transform:scaleX(1.1000);">Цена($)</span>
<span class="t" style="left:427.00px;top:507px;font-size:12.5px;transform:scaleX(1.0563);">Прим</span>
<span class="t" style="left:1730.20px;top:507px;font-size:12.5px;transform:scaleX(1.0897);">Наличие</span>
<span class="t" style="left:18.50px;top:531px;font-size:12px;color:#2c2c2c;transform:scaleX(1.0933);">FP 1427 921</span>
<span class="t" style="left:149.30px;top:531px;font-size:12px;color:#2424c4;letter-spacing:-0.060px;text-decoration:underline;">FPS</span>
<span class="t" style="left:334.00px;top:531px;font-size:12px;color:#2c2c2c;letter-spacing:0.345px;transform:scaleX(1.1000);">10.20</span>
<span class="t" style="left:1727.20px;top:531px;font-size:12px;color:#2c2c2c;letter-spacing:0.166px;transform:scaleX(1.2000);">&gt;3</span>
<span class="t" style="left:475.80px;top:471px;font-size:12.5px;font-weight:700;transform:scaleX(1.0827);z-index:5;">Фото</span>
</div>
</body></html>
